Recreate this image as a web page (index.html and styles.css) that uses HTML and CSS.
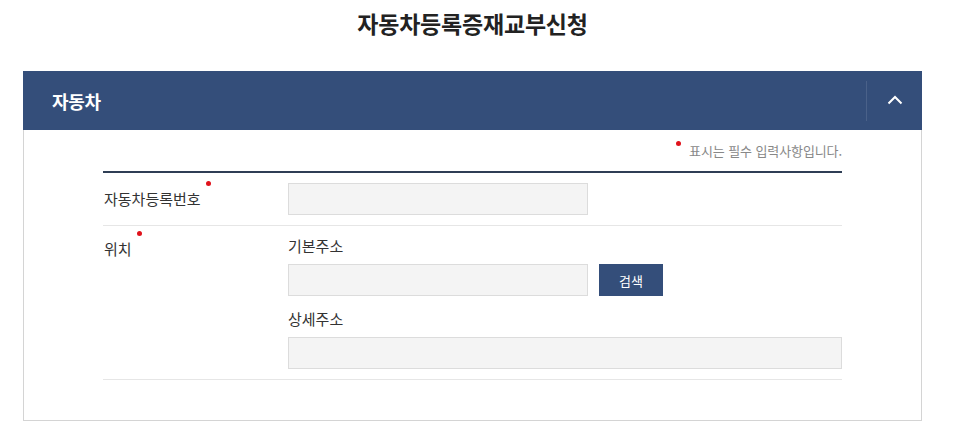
FILE: index.html
```html
<!DOCTYPE html>
<html lang="ko">
<head>
<meta charset="utf-8">
<link rel="stylesheet" href="styles.css">
</head>
<body>
<h1 class="title">자동차등록증재교부신청</h1>
<section class="panel">
  <div class="panel-head">
    <h2 class="panel-title">자동차</h2>
    <button class="toggle" type="button" aria-label="접기">
      <svg width="16" height="10" viewBox="0 0 16 10"><path d="M1.5 8.5 L8 2 L14.5 8.5" fill="none" stroke="#fff" stroke-width="2"/></svg>
    </button>
  </div>
  <div class="panel-body">
    <p class="req-note"><span class="dot"></span>표시는 필수 입력사항입니다.</p>
    <div class="form">
      <div class="row">
        <div class="label"><span class="req">자동차등록번호</span></div>
        <div class="field"><input class="input w300" type="text"></div>
      </div>
      <div class="row">
        <div class="label label-top"><span class="req">위치</span></div>
        <div class="field">
          <div class="sub-label">기본주소</div>
          <div class="line"><input class="input w300" type="text"><button class="btn" type="button">검색</button></div>
          <div class="sub-label">상세주소</div>
          <input class="input full" type="text">
        </div>
      </div>
    </div>
  </div>
</section>
</body>
</html>
```
FILE: styles.css
```css
* { box-sizing: border-box; }
body {
  margin: 0;
  background: #fff;
  font-family: "Noto Sans CJK KR", "Noto Sans", sans-serif;
  color: #333;
}
.title {
  margin: 0 38px 0 23px;
  padding-top: 6px;
  height: 71px;
  text-align: center;
  font-size: 23px;
  font-weight: 700;
  letter-spacing: -0.2px;
  color: #222;
  line-height: 34px;
}
.panel {
  margin: 0 38px 0 23px;
  border: 1px solid #d4d4d4;
  border-top: none;
}
.panel-head {
  display: flex;
  align-items: center;
  height: 59px;
  background: #344e7a;
  margin: 0 -1px;
}
.panel-title {
  flex: 1;
  margin: 0;
  padding-left: 29px;
  font-size: 18px;
  font-weight: 700;
  color: #fff;
  letter-spacing: -0.3px;
}
.toggle {
  width: 56px;
  height: 40px;
  border: none;
  border-left: 1px solid #4a6189;
  background: transparent;
  display: flex;
  align-items: center;
  justify-content: center;
  padding: 0;
  padding-bottom: 2px;
}
.panel-body {
  padding: 10px 79px 40px 79px;
}
.req-note {
  margin: 0;
  text-align: right;
  font-size: 13px;
  color: #888;
  line-height: 22px;
  height: 31px;
  letter-spacing: -0.1px;
}
.dot {
  display: inline-block;
  width: 5px;
  height: 5px;
  border-radius: 50%;
  background: #e0121b;
  vertical-align: top;
  margin: 1px 8px 0 0;
}
.form {
  border-top: 2px solid #2f3e55;
}
.row {
  display: flex;
  border-bottom: 1px solid #e6e6e6;
  padding: 10px 0 10px;
}
.label {
  width: 185px;
  flex: none;
  font-size: 15px;
  color: #333;
  padding-left: 1px;
  padding-top: 4px;
  line-height: 24px;
}
.label-top { padding-top: 1px; }
.req {
  position: relative;
}
.req::after {
  content: "";
  position: absolute;
  right: -10px;
  top: -7px;
  width: 5px;
  height: 5px;
  border-radius: 50%;
  background: #e0121b;
}
.field {
  flex: 1;
}
.sub-label {
  font-size: 15px;
  line-height: 20px;
  color: #333;
  margin: 0 0 8px;
}
.line {
  display: flex;
  gap: 11px;
  margin-bottom: 13px;
}
.input {
  display: block;
  height: 32px;
  background: #f4f4f4;
  border: 1px solid #dcdcdc;
  margin: 0;
  padding: 0 8px;
  font: inherit;
}
.w300 { width: 300px; }
.full { width: 100%; }
.btn {
  width: 64px;
  height: 32px;
  border: none;
  background: #344e7a;
  color: #fff;
  font-family: inherit;
  font-size: 13px;
  padding: 0;
}
```
